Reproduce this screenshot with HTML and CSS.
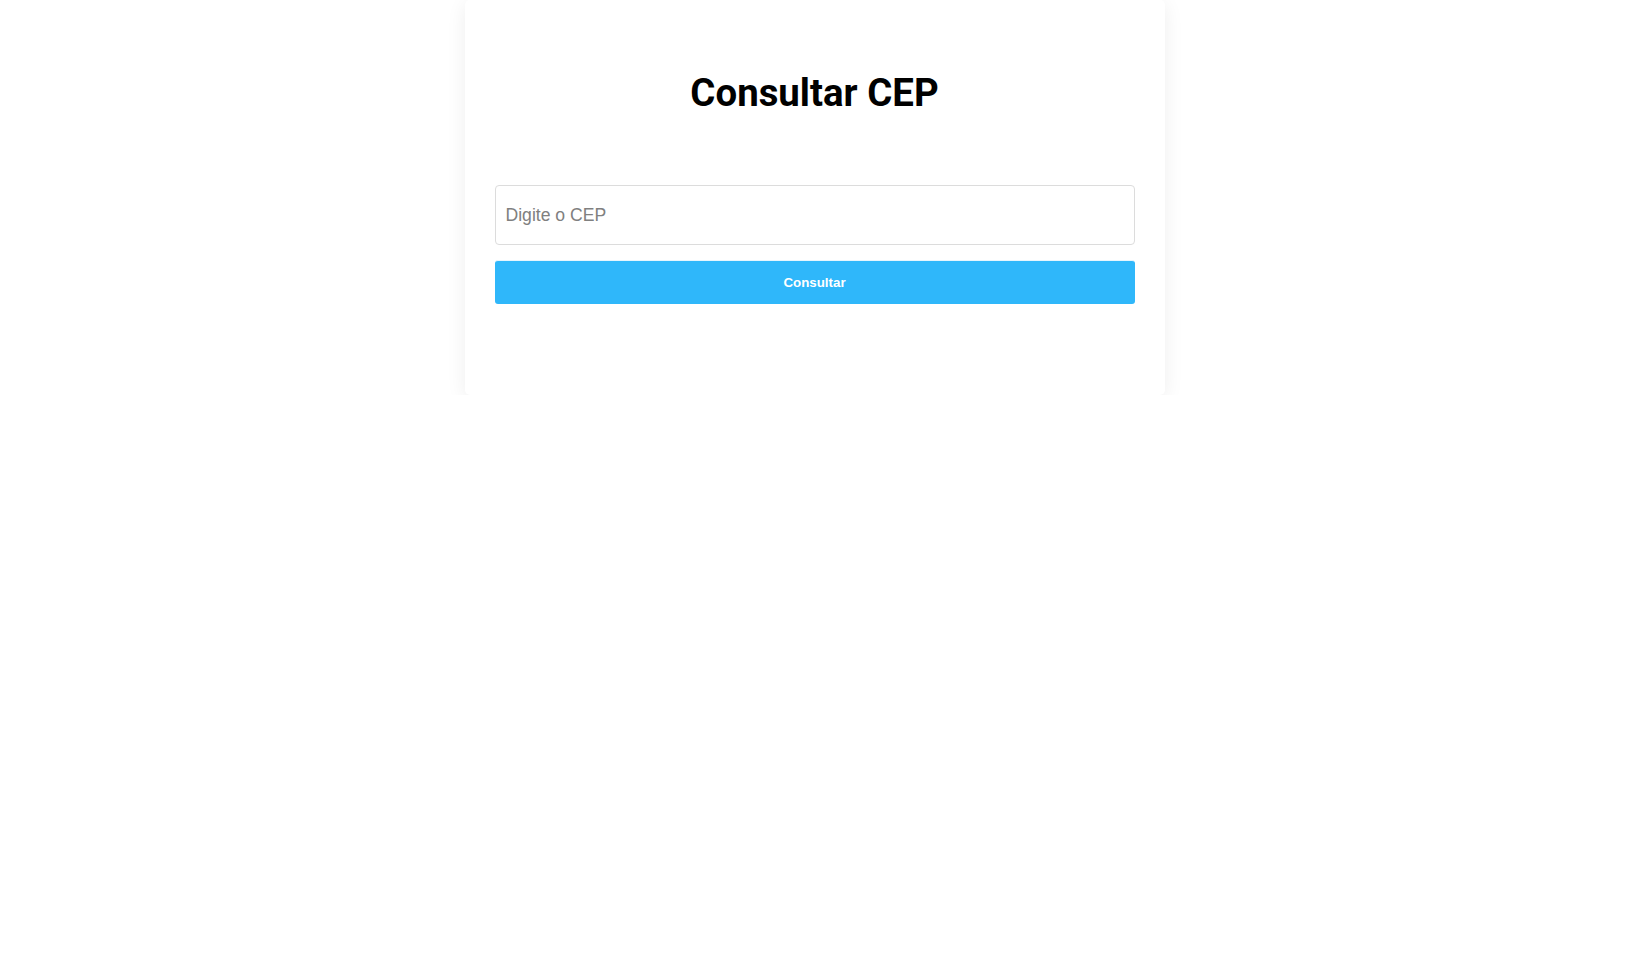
FILE: index.html
```html
<!DOCTYPE html>
<html lang="pt-BR">
<head>
<meta charset="utf-8">
<title>Consultar CEP</title>
<link rel="stylesheet" href="styles.css">
</head>
<body>
<div class="card">
  <h1 class="title">Consultar CEP</h1>
  <form class="form">
    <input class="cep-input" type="text" placeholder="Digite o CEP">
    <button class="btn" type="button">Consultar</button>
  </form>
</div>
</body>
</html>
```

FILE: styles.css
```css
html, body {
  margin: 0;
  padding: 0;
  background: #ffffff;
}
body {
  font-family: "Liberation Sans", Arial, sans-serif;
}
.card {
  width: 700px;
  box-sizing: border-box;
  margin: 0 auto;
  background: #ffffff;
  border-radius: 5px;
  box-shadow: 0 4px 20px rgba(0, 0, 0, 0.07);
  padding: 30px 30px 91px;
}
.title {
  font-family: Roboto, "Liberation Sans", sans-serif;
  font-weight: 700;
  font-size: 38.4px;
  line-height: 47px;
  text-align: center;
  color: #000;
  margin: 39px 0 69px;
}
.form {
  display: flex;
  flex-direction: column;
  gap: 15px;
  margin: 0;
}
.cep-input {
  box-sizing: border-box;
  height: 60px;
  width: 100%;
  padding: 0 10px;
  border: 1px solid #dcdcdc;
  border-radius: 4px;
  font-family: "Liberation Sans", Arial, sans-serif;
  font-size: 17.6px;
  color: #333;
  outline: none;
}
.cep-input::placeholder {
  color: #808080;
}
.btn {
  box-sizing: border-box;
  height: 44px;
  width: 100%;
  border: none;
  border-top: 1px solid #e6f5fd;
  border-radius: 3px;
  background: #2fb7fa;
  color: #ffffff;
  font-family: "Liberation Sans", Arial, sans-serif;
  font-weight: 700;
  font-size: 13.333px;
  cursor: pointer;
}
```
